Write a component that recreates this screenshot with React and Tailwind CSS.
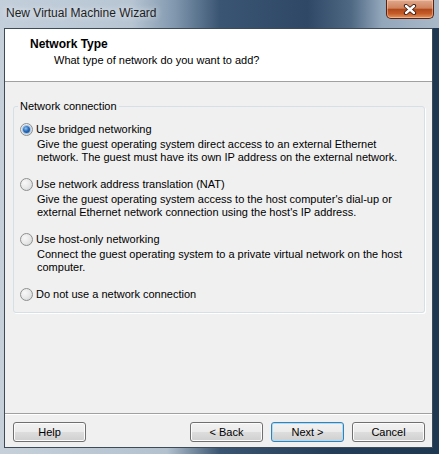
import React from "react";

const options = [
  {
    label: "Use bridged networking",
    desc: [
      "Give the guest operating system direct access to an external Ethernet",
      "network. The guest must have its own IP address on the external network.",
    ],
    checked: true,
  },
  {
    label: "Use network address translation (NAT)",
    desc: [
      "Give the guest operating system access to the host computer's dial-up or",
      "external Ethernet network connection using the host's IP address.",
    ],
  },
  {
    label: "Use host-only networking",
    desc: [
      "Connect the guest operating system to a private virtual network on the host",
      "computer.",
    ],
  },
  { label: "Do not use a network connection", desc: [] },
];

function Radio({ checked }) {
  return (
    <span className="w-[13px] h-[13px] shrink-0 rounded-full border border-[#8e8f8f] bg-[radial-gradient(circle_at_35%_35%,#f8f8f8_0%,#e6e6e6_55%,#c9cdd2_100%)] flex items-center justify-center">
      {checked && (
        <span className="w-[7px] h-[7px] rounded-full bg-[radial-gradient(circle_at_40%_35%,#8fc4f4_0%,#2b6cb8_45%,#0e3f86_100%)] shadow-[0_0_0_1px_#9cc3e8]" />
      )}
    </span>
  );
}

function Button({ children, primary }) {
  return (
    <button
      className={`w-[73px] h-[20px] rounded-[3px] border text-[11px] leading-[18px] text-black bg-[linear-gradient(#f2f2f2_0%,#ebebeb_48%,#dddddd_52%,#cfcfcf_100%)] ${
        primary
          ? "border-[#3c7fb1] shadow-[inset_0_0_0_1px_#a6def8]"
          : "border-[#707070] shadow-[inset_0_0_0_1px_#fcfcfc]"
      }`}
    >
      {children}
    </button>
  );
}

export default function App() {
  return (
    <div className="w-[439px] h-[454px] overflow-hidden flex flex-col font-['Liberation_Sans',Arial,sans-serif] bg-[linear-gradient(90deg,#c5d0da_0%,#b3c1cf_38%,#3b5672_50%,#243d58_75%,#1f3852_100%)]">
      {/* title bar */}
      <div className="h-[28px] shrink-0 flex items-start justify-between bg-[linear-gradient(90deg,#c3cfdb_0%,#b7c5d3_30%,#7f96ad_40%,#3a5573_50%,#2e4866_70%,#4f6984_80%,#93a7bb_87%,#a9b9c9_100%)]">
        <span className="pl-[6px] pt-[6px] text-[12px] leading-[15px] text-[#1e1e1e] [text-shadow:0_0_6px_rgba(255,255,255,0.9)]">
          New Virtual Machine Wizard
        </span>
        <div className="w-[48px] h-[19px] mr-[5px] rounded-b-[5px] border border-t-0 border-[#5a2212] bg-[linear-gradient(#e0a88c_0%,#cf845e_45%,#b04a1c_52%,#c45a26_75%,#e4955f_100%)] shadow-[inset_0_0_0_1px_rgba(255,220,200,0.45)] flex items-center justify-center">
          <svg width="14" height="11" viewBox="0 0 14 11">
            <path d="M3 2 L11 9 M11 2 L3 9" stroke="#3b1a10" strokeWidth="4.2" strokeLinecap="round" />
            <path d="M3 2 L11 9 M11 2 L3 9" stroke="#ffffff" strokeWidth="2.4" strokeLinecap="round" />
          </svg>
        </div>
      </div>

      {/* client area */}
      <div className="ml-[4px] w-[429px] h-[420px] border border-[#3d4b59] flex flex-col">
        <div className="h-[53px] shrink-0 bg-white border-b border-[#a0a0a0] pl-[25px] pt-[8px]">
          <div className="text-[12px] leading-[15px] font-bold text-black">Network Type</div>
          <div className="mt-[1px] pl-[24px] text-[11px] leading-[15px] text-black">
            What type of network do you want to add?
          </div>
        </div>

        <div className="flex-1 bg-[#f0f0f0] flex flex-col pb-[5px]">
          <fieldset className="mt-[17px] ml-[8px] mr-[7px] pl-[4px] pt-[8px] pb-[10px] border border-[#d5dfe5] rounded-[3px] shadow-[1px_1px_0_#ffffff]">
            <legend className="px-[2px] text-[11px] leading-[15px] text-black">Network connection</legend>
            <div className="flex flex-col gap-[13px] pl-[2px]">
              {options.map((o) => (
                <div key={o.label}>
                  <div className="flex items-center gap-[3px] h-[15px]">
                    <Radio checked={o.checked} />
                    <span className="text-[11px] leading-[15px] text-black">{o.label}</span>
                  </div>
                  {o.desc.length > 0 && (
                    <div className="mt-[1px] pl-[17px] text-[11px] leading-[13px] text-black">
                      {o.desc.map((d) => (
                        <div key={d}>{d}</div>
                      ))}
                    </div>
                  )}
                </div>
              ))}
            </div>
          </fieldset>

          <div className="mt-auto h-[2px] border-t border-[#a0a0a0] bg-white" />
          <div className="flex items-center pt-[7px] pl-[8px] pr-[7px]">
            <Button>Help</Button>
            <div className="ml-auto flex gap-[8px]">
              <Button>&lt; Back</Button>
              <Button primary>Next &gt;</Button>
              <Button>Cancel</Button>
            </div>
          </div>
        </div>
      </div>
    </div>
  );
}
